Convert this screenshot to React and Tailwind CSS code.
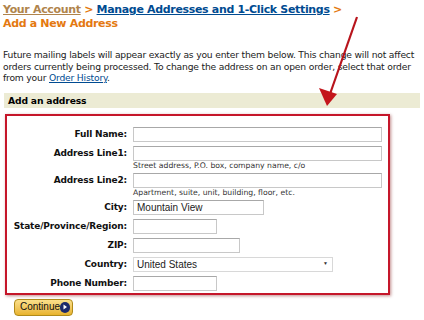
import { useState } from "react";

const fields = [
  { label: "Full Name:", w: "w-[249px]" },
  { label: "Address Line1:", w: "w-[249px]", hint: "Street address, P.O. box, company name, c/o" },
  { label: "Address Line2:", w: "w-[249px]", hint: "Apartment, suite, unit, building, floor, etc." },
  { label: "City:", w: "w-[131px]", value: "Mountain View" },
  { label: "State/Province/Region:", w: "w-[84px]" },
  { label: "ZIP:", w: "w-[107px]" },
  { label: "Country:", w: "w-[200px]", select: true, value: "United States" },
  { label: "Phone Number:", w: "w-[84px]" },
];

export default function App() {
  return (
    <div className="relative h-[320px] w-[424px] overflow-hidden bg-white font-['DejaVu_Sans',sans-serif] text-[#000]">
      <div className="whitespace-nowrap pl-[3px] pt-[3px] text-[11px] font-bold leading-[14px] tracking-[-0.33px]">
        <a className="text-[#b0844c] underline">Your Account</a>
        <span className="text-[#e47911]"> &gt; </span>
        <a className="text-[#004b91] underline">Manage Addresses and 1-Click Settings</a>
        <span className="text-[#e47911]"> &gt;</span>
        <div className="text-[#e47911]">Add a New Address</div>
      </div>

      <p className="mt-[18px] whitespace-nowrap pl-[3px] text-[9.2px] leading-[11.5px] tracking-[-0.19px] text-[#222]">
        Future mailing labels will appear exactly as you enter them below. This change will not affect
        <br />
        orders currently being processed. To change the address on an open order, select that order
        <br />
        from your <a className="text-[#004b91] underline">Order History</a>.
      </p>

      <div className="mx-[4px] mt-[9px] h-[15px] bg-[#ecebd4] pl-[4px] text-[9.2px] font-bold leading-[15px] tracking-[-0.15px]">
        Add an address
      </div>

      <div className="ml-[5px] mt-[6px] h-[181px] w-[385px] border-2 border-[#c5162a] pt-[11px] shadow-[1px_1px_3px_rgba(120,0,0,0.45)]">
        {fields.map((f) => (
          <div key={f.label} className="mb-[4px] flex">
            <div className="w-[126px] shrink-0 whitespace-nowrap pr-[6px] text-right text-[9px] font-bold leading-[15px] tracking-[-0.15px] text-[#111]">
              {f.label}
            </div>
            <div className="flex flex-col">
              {f.select ? (
                <div className={`${f.w} flex h-[15px] items-center justify-between border border-[#d8d8d8] bg-white pl-[3px] pr-[4px] font-['Liberation_Sans',sans-serif] text-[10px] text-[#222]`}>
                  <span>{f.value}</span>
                  <span className="text-[5px] text-[#333]">▼</span>
                </div>
              ) : (
                <div className={`${f.w} h-[15px] border border-[#c8c8c8] border-t-[#a8a8a8] bg-white pl-[3px] font-['Liberation_Sans',sans-serif] text-[10px] leading-[13px] text-[#222]`}>
                  {f.value}
                </div>
              )}
              {f.hint && <div className="mt-[1px] whitespace-nowrap text-[7.7px] leading-[7px] text-[#333]">{f.hint}</div>}
            </div>
          </div>
        ))}
      </div>

      <button className="ml-[14px] mt-[4px] flex h-[17px] w-[59px] items-center justify-between rounded-[4px] border border-[#b08a1a] bg-gradient-to-b from-[#fbe08a] to-[#e8b32a] pl-[5px] pr-[2px] font-['Liberation_Sans_Narrow','Liberation_Sans',sans-serif] text-[10px] leading-none text-[#111]">
        <span>Continue</span>
        <span className="flex h-[11px] w-[11px] items-center justify-center rounded-full bg-[#1d2a6b]">
          <svg width="6" height="6" viewBox="0 0 6 6"><path d="M1.5 0.5 L5 3 L1.5 5.5 Z" fill="#fff" /></svg>
        </span>
      </button>

      <svg className="pointer-events-none absolute left-0 top-0" width="424" height="320" viewBox="0 0 424 320">
        <line x1="357" y1="17" x2="330" y2="94" stroke="#b8141c" strokeWidth="2.2" />
        <path d="M327 106 L319 88 L337 94 Z" fill="#c4161c" />
      </svg>
    </div>
  );
}
